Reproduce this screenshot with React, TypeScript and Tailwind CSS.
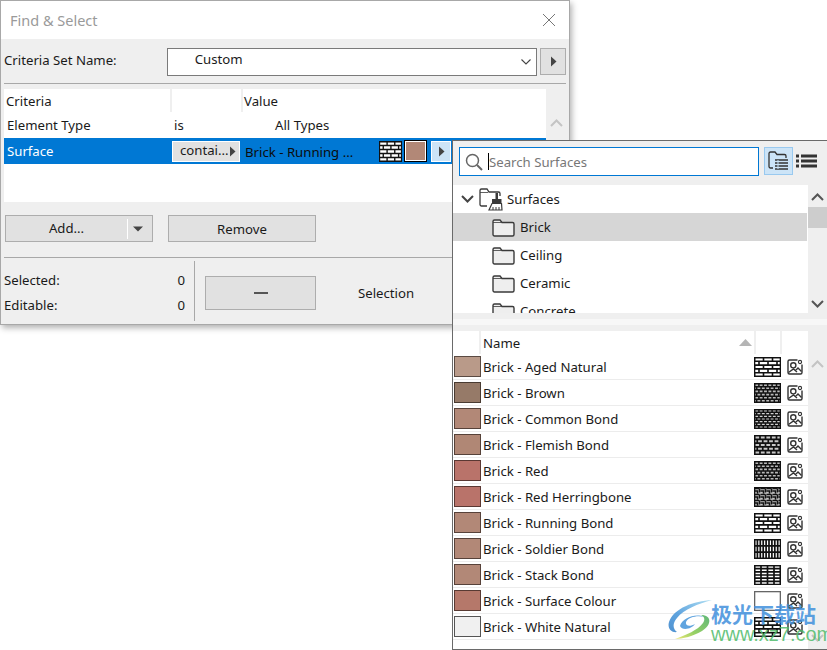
import React from "react";

type HatchKind = "running" | "dense" | "common" | "flemish" | "herring" | "soldier" | "stack" | "empty";

function Hatch({ kind, width = 27, height = 20 }: { kind: HatchKind; width?: number; height?: number }) {
  const lines: string[] = [];
  const w = 26;
  const h = 19;
  const brick = (rowH: number, brickW: number) => {
    let row = 0;
    for (let y = 0; y <= h + 0.01; y += rowH) {
      lines.push(`M0 ${y}H${w}`);
      if (y < h) {
        const off = row % 2 ? brickW / 2 : 0;
        for (let x = off; x <= w; x += brickW) {
          lines.push(`M${x} ${y}V${Math.min(y + rowH, h)}`);
        }
      }
      row++;
    }
  };
  let sw = 1.6;
  let fill = "#fff";
  if (kind === "running") brick(19 / 5, 9);
  if (kind === "dense") { brick(19 / 6, 4.4); sw = 1.5; fill = "#b8b8b8"; }
  if (kind === "common") { brick(19 / 7, 4.4); sw = 1.5; fill = "#d0d0d0"; }
  if (kind === "flemish") { brick(19 / 5, 5.5); sw = 1.7; fill = "#c8c8c8"; }
  if (kind === "herring") {
    sw = 1.5;
    fill = "#c4c4c4";
    for (let y = 0; y < h; y += 6) {
      for (let x = 0; x < w; x += 6) {
        lines.push(`M${x} ${y + 1}h5M${x + 5} ${y + 1}v4M${x} ${y + 3.5}h3v2.5`);
      }
    }
  }
  if (kind === "soldier") {
    sw = 1.7;
    for (let x = 0; x <= w; x += 2.9) lines.push(`M${x} 0V${h}`);
    for (let y = 0; y <= h; y += 6.33) lines.push(`M0 ${y}H${w}`);
  }
  if (kind === "stack") {
    sw = 1.7;
    for (let x = 0; x <= w; x += 6.5) lines.push(`M${x} 0V${h}`);
    for (let y = 0; y <= h; y += 3.17) lines.push(`M0 ${y}H${w}`);
  }
  return (
    <svg width={width} height={height} viewBox="-0.5 -0.5 27 20" preserveAspectRatio="none" className="block shrink-0" fill="none">
      <rect x="0" y="0" width={w} height={h} fill={fill} stroke={kind === "empty" ? "#666" : "#111"} strokeWidth="1.6" />
      <path d={lines.join("")} stroke="#111" strokeWidth={sw} />
    </svg>
  );
}

function ImageIcon() {
  return (
    <svg width="16" height="16" viewBox="0 0 16 16" fill="none" stroke="#333" strokeWidth="1.4" className="block shrink-0">
      <path d="M10.5 1H2.5A1.5 1.5 0 0 0 1 2.5V13.5A1.5 1.5 0 0 0 2.5 15H13.5A1.5 1.5 0 0 0 15 13.5V5.5" />
      <circle cx="13" cy="3" r="1.6" strokeWidth="1.1" />
      <circle cx="6.3" cy="6.3" r="2.6" />
      <path d="M1.5 13.5L6.5 10L10 13M8.5 11.5L11 9L14.5 12.5" />
    </svg>
  );
}

function Tri({ color = "#444" }: { color?: string }) {
  return (
    <svg width="7" height="11" viewBox="0 0 7 11" className="block shrink-0">
      <path d="M1 0.5L6.5 5.5L1 10.5Z" fill={color} />
    </svg>
  );
}

function Folder() {
  return (
    <svg width="23" height="19" viewBox="0 0 23 19" fill="none" className="block shrink-0">
      <path d="M1 3.5A1.5 1.5 0 0 1 2.5 2H8L10 4.5H20.5A1.5 1.5 0 0 1 22 6V16.5A1.5 1.5 0 0 1 20.5 18H2.5A1.5 1.5 0 0 1 1 16.5Z" fill="#eeeeee" stroke="#3a3a3a" strokeWidth="1.4" />
      <path d="M1 4.5H9.5" stroke="#3a3a3a" strokeWidth="0.8" />
    </svg>
  );
}

function RootFolder() {
  return (
    <svg width="24" height="24" viewBox="0 0 24 24" fill="none" className="block shrink-0">
      <path d="M8 19H2.5A1.5 1.5 0 0 1 1 17.5V3.5A1.5 1.5 0 0 1 2.5 2H8L10 5H19.5A1.5 1.5 0 0 1 21 6.5V9" stroke="#3a3a3a" strokeWidth="1.3" />
      <path d="M1 5.5H9" stroke="#3a3a3a" strokeWidth="0.8" />
      <rect x="16.5" y="6" width="2.5" height="6" fill="#3a3a3a" />
      <path d="M13 12H22.5V16H13Z" fill="#3a3a3a" />
      <path d="M13 16.5H22.5L23 23H10Z" fill="#fff" stroke="#3a3a3a" strokeWidth="1.2" />
      <path d="M14 20V23M17 20V23M20 20V23" stroke="#3a3a3a" />
    </svg>
  );
}

const surfaces: { name: string; color: string; edge: string; hatch: HatchKind }[] = [
  { name: "Brick - Aged Natural", color: "#b99a89", edge: "#5a4a42", hatch: "running" },
  { name: "Brick - Brown", color: "#967a68", edge: "#493b32", hatch: "dense" },
  { name: "Brick - Common Bond", color: "#b28877", edge: "#57423a", hatch: "common" },
  { name: "Brick - Flemish Bond", color: "#b08775", edge: "#564239", hatch: "flemish" },
  { name: "Brick - Red", color: "#b9736a", edge: "#5a3833", hatch: "dense" },
  { name: "Brick - Red Herringbone", color: "#b9736a", edge: "#5a3833", hatch: "herring" },
  { name: "Brick - Running Bond", color: "#b28877", edge: "#57423a", hatch: "running" },
  { name: "Brick - Soldier Bond", color: "#b28877", edge: "#57423a", hatch: "soldier" },
  { name: "Brick - Stack Bond", color: "#b28877", edge: "#57423a", hatch: "stack" },
  { name: "Brick - Surface Colour", color: "#b5786a", edge: "#583a33", hatch: "empty" },
  { name: "Brick - White Natural", color: "#f0f0f0", edge: "#555555", hatch: "running" },
];

function ChevUp({ color = "#c4c4c4" }: { color?: string }) {
  return (
    <svg width="13" height="8" viewBox="0 0 13 8" fill="none" className="block">
      <path d="M1 7L6.5 1.5L12 7" stroke={color} strokeWidth="2" />
    </svg>
  );
}

function ChevDown({ color = "#c4c4c4" }: { color?: string }) {
  return (
    <svg width="13" height="8" viewBox="0 0 13 8" fill="none" className="block">
      <path d="M1 1L6.5 6.5L12 1" stroke={color} strokeWidth="2" />
    </svg>
  );
}

export default function App() {
  return (
    <div className="relative h-[650px] w-[827px] overflow-hidden bg-white text-[13.2px] text-[#1a1a1a] font-['Noto_Sans','Open_Sans',sans-serif]">
      {/* Find & Select window */}
      <div className="absolute left-0 top-0 flex h-[325px] w-[570px] flex-col border border-[#a8a8a8] bg-[#efefef] shadow-[2px_3px_6px_rgba(0,0,0,0.3)]">
        <div className="flex h-[38px] shrink-0 items-center justify-between bg-white pl-[9px] pr-[13px]">
          <span className="pt-[2px] text-[14.5px] text-[#9a9a9a]">Find &amp; Select</span>
          <svg width="14" height="14" viewBox="0 0 14 14" fill="none">
            <path d="M1 1L13 13M13 1L1 13" stroke="#777" strokeWidth="1" />
          </svg>
        </div>

        <div className="flex h-[44px] shrink-0 items-center pl-[3px] pr-[3px] pt-[1px]">
          <span className="-mt-[1px] w-[163px]">Criteria Set Name:</span>
          <div className="flex h-[28px] w-[371px] items-center justify-between border border-[#7a7a7a] bg-white pl-[27px] pr-[5px]">
            <span className="-mt-[4px]">Custom</span>
            <svg width="10" height="6" viewBox="0 0 10 6" fill="none" className="block">
              <path d="M0.5 0.5L5 5L9.5 0.5" stroke="#444" strokeWidth="1.1" />
            </svg>
          </div>
          <div className="ml-[3px] flex h-[27px] w-[26px] items-center justify-center border border-[#adadad] bg-[#e1e1e1]">
            <Tri />
          </div>
        </div>

        <div className="mx-[3px] h-[1px] shrink-0 bg-[#a8a8a8]" />

        <div className="mx-[3px] mt-[5px] flex h-[113px] shrink-0">
          <div className="flex w-[542px] flex-col bg-white">
            <div className="flex h-[23px] shrink-0 items-start">
              <span className="h-[23px] w-[168px] border-r-2 border-[#efefef] pl-[2px] leading-[25px]">Criteria</span>
              <span className="h-[23px] w-[71px] border-r-2 border-[#efefef]" />
              <span className="pl-[1px] leading-[25px]">Value</span>
            </div>
            <div className="flex h-[26px] shrink-0 items-center pt-[2px]">
              <span className="w-[170px] pl-[3px]">Element Type</span>
              <span className="w-[101px]">is</span>
              <span>All Types</span>
            </div>
            <div className="flex h-[26px] shrink-0 items-center bg-[#0078d4]">
              <span className="w-[168px] pl-[3px] pt-[2px] text-white">Surface</span>
              <div className="flex h-[21px] w-[68px] items-center justify-between border border-white bg-[#e1e1e1] pl-[7px] pr-[3px]">
                <span className="leading-none">contai...</span>
                <Tri />
              </div>
              <span className="ml-[5px] w-[134px] whitespace-nowrap pt-[3px] text-[#0c0c0c]">Brick - Running ...</span>
              <Hatch kind="running" width={23} height={21} />
              <div className="ml-[2px] flex h-[22px] w-[23px] items-center justify-center border border-black bg-white">
                <div className="h-[18px] w-[19px] bg-[#b28877]" />
              </div>
              <div className="ml-[4px] flex h-[21px] w-[20px] items-center justify-center border border-white bg-[#cce4f7]">
                <Tri />
              </div>
            </div>
          </div>
          <div className="flex flex-1 justify-center pt-[30px]">
            <ChevUp />
          </div>
        </div>

        <div className="mt-[13px] flex shrink-0 pl-[4px]">
          <div className="flex h-[27px] w-[148px] items-center border border-[#adadad] bg-[#e1e1e1]">
            <span className="w-[121px] pt-[1px] text-center">Add...</span>
            <span className="h-[20px] w-[1px] bg-white" />
            <span className="flex flex-1 justify-center pr-[4px]">
              <svg width="10" height="6" viewBox="0 0 10 6"><path d="M0 0.5H10L5 5.5Z" fill="#444" /></svg>
            </span>
          </div>
          <div className="ml-[15px] flex h-[27px] w-[148px] items-center justify-center border border-[#adadad] bg-[#e1e1e1] pt-[2px]">Remove</div>
        </div>

        <div className="mx-[3px] mt-[15px] h-[1px] shrink-0 bg-[#a8a8a8]" />

        <div className="flex flex-1 pl-[3px]">
          <div className="flex w-[190px] flex-col justify-center gap-[6px] pr-[9px] pt-[3px] leading-[19px]">
            <div className="flex justify-between"><span>Selected:</span><span>0</span></div>
            <div className="flex justify-between"><span>Editable:</span><span>0</span></div>
          </div>
          <div className="mt-[3px] h-[60px] w-[1px] bg-[#a8a8a8]" />
          <div className="flex flex-1 items-start pl-[10px] pt-[18px]">
            <div className="flex h-[34px] w-[111px] items-center justify-center border border-[#adadad] bg-[#e1e1e1]">
              <div className="h-[2px] w-[14px] bg-[#555]" />
            </div>
            <span className="ml-[42px] mt-[8px]">Selection</span>
          </div>
        </div>
      </div>

      {/* Surfaces popup */}
      <div className="absolute left-[452px] top-[140px] flex h-[510px] w-[376px] flex-col border border-[#6a6a6a] bg-[#efefef]">
        <div className="flex h-[44px] shrink-0 items-start pl-[6px] pt-[6px]">
          <div className="flex h-[29px] w-[300px] items-center border border-[#0078d4] bg-white pl-[5px]">
            <svg width="18" height="18" viewBox="0 0 18 18" fill="none" className="shrink-0">
              <circle cx="7.5" cy="7.5" r="6" stroke="#666" strokeWidth="1.5" />
              <path d="M12 12L17 17" stroke="#666" strokeWidth="2" />
            </svg>
            <span className="ml-[5px] h-[17px] w-[1px] bg-black" />
            <span className="pt-[3px] text-[#777]">Search Surfaces</span>
          </div>
          <div className="ml-[5px] flex h-[28px] w-[29px] items-center justify-center border border-[#99c9ef] bg-[#cce4f7]">
            <svg width="21" height="20" viewBox="0 0 21 20" fill="none">
              <path d="M5 17H2.5A1.5 1.5 0 0 1 1 15.5V2.5A1.5 1.5 0 0 1 2.5 1H7L9 3.5H16.5A1.5 1.5 0 0 1 18 5V7" stroke="#333" strokeWidth="1.3" />
              <path d="M7 9H20M7 12H20M7 15H20M7 18H20" stroke="#333" strokeWidth="1.5" />
              <path d="M10 9V18" stroke="#cce4f7" strokeWidth="1" />
            </svg>
          </div>
          <svg width="21" height="14" viewBox="0 0 21 14" className="ml-[3px] mt-[7px]" fill="#333">
            <rect x="0" y="0.5" width="3" height="3" />
            <rect x="5" y="0.5" width="16" height="3" />
            <rect x="0" y="5.5" width="3" height="3" />
            <rect x="5" y="5.5" width="16" height="3" />
            <rect x="0" y="10.5" width="3" height="3" />
            <rect x="5" y="10.5" width="16" height="3" />
          </svg>
        </div>

        <div className="flex h-[128px] shrink-0">
          <div className="w-[355px] overflow-hidden bg-white">
            <div className="flex h-[28px] items-center pl-[8px]">
              <ChevDown color="#444" />
              <span className="ml-[5px]"><RootFolder /></span>
              <span className="ml-[4px] pt-[2px]">Surfaces</span>
            </div>
            {["Brick", "Ceiling", "Ceramic", "Concrete"].map((n, i) => (
              <div key={n} className={`mr-[1px] flex h-[28px] shrink-0 items-center pl-[39px] ${i === 0 ? "bg-[#d6d6d6]" : ""}`}>
                <Folder />
                <span className="ml-[5px] pt-[2px]">{n}</span>
              </div>
            ))}
          </div>
          <div className="flex flex-1 flex-col items-center">
            <div className="pt-[8px]"><ChevUp color="#555" /></div>
            <div className="mt-[6px] h-[21px] w-full bg-[#cdcdcd]" />
            <div className="mt-[72px]"><ChevDown color="#555" /></div>
          </div>
        </div>

        <div className="mt-[6px] h-[6px] shrink-0 bg-[#f7f7f7]" />

        <div className="mt-[6px] flex flex-1">
          <div className="w-[355px] bg-white">
            <div className="flex h-[23px] items-center">
              <span className="h-full w-[28px] border-r-2 border-[#efefef]" />
              <span className="w-[273px] pl-[2px] pt-[2px]">Name</span>
              <svg width="13" height="7" viewBox="0 0 13 7" className="-ml-[15px] mr-[2px]"><path d="M0 7L6.5 0L13 7Z" fill="#b5b5b5" /></svg>
              <span className="h-full w-[28px] border-x-2 border-[#efefef]" />
            </div>
            {surfaces.map((s) => (
              <div key={s.name} className="flex h-[26px] items-center border-b border-[#ececec]">
                <div className="ml-[1px] h-[21px] w-[27px] border-[1.5px]" style={{ backgroundColor: s.color, borderColor: s.edge }} />
                <span className="ml-[2px] w-[271px] pt-[2px]">{s.name}</span>
                <Hatch kind={s.hatch} />
                <span className="ml-[6px]"><ImageIcon /></span>
              </div>
            ))}
          </div>
          <div className="flex flex-1 flex-col items-center">
            <div className="pt-[29px]"><ChevUp /></div>
            <div className="mt-[266px]"><ChevDown /></div>
          </div>
        </div>
      </div>

      {/* Watermark */}
      <div className="absolute left-[668px] top-[600px] flex items-start">
        <svg width="44" height="40" viewBox="0 0 44 40" className="opacity-90">
          <defs>
            <linearGradient id="wmBlue" x1="1" y1="0" x2="0" y2="1">
              <stop offset="0" stopColor="#a8dcf2" />
              <stop offset="0.6" stopColor="#4f9bdc" />
              <stop offset="1" stopColor="#3d86cc" />
            </linearGradient>
            <linearGradient id="wmGreen" x1="1" y1="0" x2="0" y2="1">
              <stop offset="0" stopColor="#4fb06a" />
              <stop offset="0.6" stopColor="#8ccc55" />
              <stop offset="1" stopColor="#f0e66a" />
            </linearGradient>
          </defs>
          <path d="M44 0C26 1 6 8 1 22C-1 29 4 33 9 32C5 29 4 24 9 18C16 9 30 4 44 0Z" fill="url(#wmBlue)" />
          <path d="M12 26C14 18 28 13 36 17C30 15 20 17 18 22C17 26 22 27 27 24C24 29 14 31 12 26Z" fill="#4f9bdc" />
          <path d="M33 15C44 15 44 25 34 31C26 36 14 39 7 39C18 35 30 30 35 23C37 20 37 17 33 15Z" fill="url(#wmGreen)" />
        </svg>
        <div className="-ml-[1px] flex flex-col">
          <span className="whitespace-nowrap text-[21px] font-bold leading-[26px] text-[#3f8fdc]/85 font-['Noto_Sans_CJK_SC',sans-serif]">极光下载站</span>
          <span className="whitespace-nowrap text-[20px] leading-[16px] text-[#4fbb6a]/85 font-['Liberation_Sans',sans-serif]">www.xz7.com</span>
        </div>
      </div>
    </div>
  );
}
